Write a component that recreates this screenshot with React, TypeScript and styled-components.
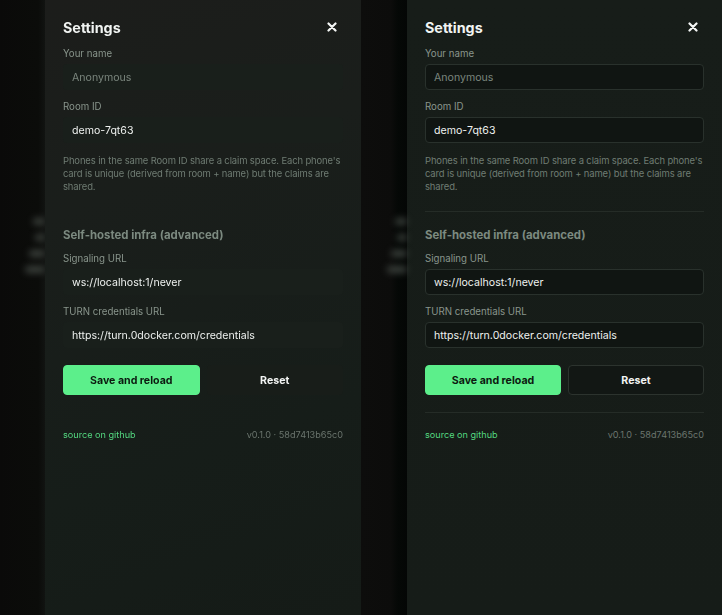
import React, { FC } from "react";
import styled, { createGlobalStyle, css } from "styled-components";

const GlobalStyle = createGlobalStyle`
  html, body {
    margin: 0;
    padding: 0;
    background: #070807;
  }
  body {
    font-family: Inter, "Noto Sans", "Liberation Sans", sans-serif;
    -webkit-font-smoothing: antialiased;
  }
`;

type Faded = { faded?: boolean };

const Stage = styled.div`
  display: grid;
  grid-template-columns: 361px 361px;
  width: 722px;
  height: 615px;
  overflow: hidden;
`;

const Column = styled.div`
  display: flex;
  height: 615px;
`;

const Backdrop = styled.div<Faded>`
  width: ${(p) => (p.faded ? 45 : 46)}px;
  flex: none;
  display: flex;
  flex-direction: column;
  align-items: flex-end;
  gap: 9px;
  padding-top: 218px;
  box-sizing: border-box;
  background: ${(p) =>
    p.faded
      ? "linear-gradient(90deg, #0a0a09 0%, #0b0c0a 85%, #111311 100%)"
      : "linear-gradient(90deg, #0d0d0c 0%, #0c0c0b 65%, #050806 80%, #040605 100%)"};
`;

const Blob = styled.div<{ w: number }>`
  width: ${(p) => p.w}px;
  height: 7px;
  border-radius: 4px;
  background: #454b46;
  filter: blur(3.5px);
  opacity: 0.85;
`;

const Panel = styled.div<Faded>`
  flex: 1;
  display: flex;
  flex-direction: column;
  padding: 16px 18px 0 18px;
  box-sizing: border-box;
  color: #e8ece9;
  background: ${(p) =>
    p.faded
      ? "linear-gradient(160deg, #1c1d1b 0%, #1a1e1b 30%, #161d19 70%, #151b17 100%)"
      : "linear-gradient(180deg, #171d19 0%, #161c18 100%)"};
  ${(p) =>
    p.faded &&
    css`
      filter: blur(0.35px);
    `}
`;

const Header = styled.div`
  display: flex;
  align-items: center;
  justify-content: space-between;
  height: 22px;
`;

const Title = styled.h2`
  margin: 0;
  font-size: 14.3px;
  font-weight: 700;
  color: #f1f4f2;
`;

const Close = styled.button`
  border: 0;
  background: none;
  padding: 0 6px 0 0;
  color: #f4f6f5;
  display: flex;
  cursor: pointer;
`;

const Label = styled.label<{ first?: boolean }>`
  display: block;
  font-size: 9.7px;
  color: #89958c;
  margin: ${(p) => (p.first ? 10 : 11)}px 0 4px;
  line-height: 12px;
`;

const Input = styled.div<Faded & { placeholder?: boolean }>`
  height: 26px;
  box-sizing: border-box;
  border-radius: 4px;
  padding: 0 8px;
  display: flex;
  align-items: center;
  font-size: 10.6px;
  color: ${(p) => (p.placeholder ? "#7a857d" : "#eef1ef")};
  background: ${(p) => (p.faded ? "#191f1b" : "#101512")};
  border: 1px solid ${(p) => (p.faded ? "transparent" : "#29312c")};
`;

const Help = styled.p`
  margin: 11px 0 0;
  font-size: 9.45px;
  letter-spacing: -0.12px;
  line-height: 13px;
  color: #6f7c73;
`;

const Divider = styled.hr<Faded>`
  border: 0;
  height: 1px;
  margin: 0;
  background: ${(p) => (p.faded ? "transparent" : "#252c27")};
`;

const Section = styled.h3`
  margin: 15px 0 0;
  font-size: 11.4px;
  line-height: 16px;
  font-weight: 700;
  color: #7c8a80;
`;

const Buttons = styled.div`
  display: grid;
  grid-template-columns: 1fr 1fr;
  gap: 7px;
  margin-top: 17px;
`;

const Button = styled.button<Faded & { primary?: boolean }>`
  height: 30px;
  border-radius: 4px;
  font-family: inherit;
  font-size: 10.6px;
  font-weight: 700;
  cursor: pointer;
  ${(p) =>
    p.primary
      ? css`
          background: #5cef8b;
          border: 1px solid #5cef8b;
          color: #0c1a10;
        `
      : css`
          background: ${p.faded ? "#181d19" : "#121714"};
          border: 1px solid ${p.faded ? "transparent" : "#2c332e"};
          color: #f2f4f3;
        `}
`;

const Footer = styled.div`
  display: flex;
  justify-content: space-between;
  align-items: center;
  margin-top: 16px;
  font-size: 9.15px;
  line-height: 12px;
`;

const Link = styled.a`
  color: #54d981;
  text-decoration: none;
`;

const Version = styled.span`
  color: #6b756e;
`;

const CloseIcon = () => (
  <svg width="10" height="10" viewBox="0 0 10 10">
    <path
      d="M1.5 1.5 L8.5 8.5 M8.5 1.5 L1.5 8.5"
      stroke="currentColor"
      strokeWidth="2.2"
      strokeLinecap="round"
    />
  </svg>
);

const SettingsPanel: FC<Faded> = ({ faded }) => (
  <Column>
    <Backdrop faded={faded}>
      <Blob w={12} />
      <Blob w={10} />
      <Blob w={16} />
      <Blob w={20} />
    </Backdrop>
    <Panel faded={faded}>
      <Header>
        <Title>Settings</Title>
        <Close aria-label="close">
          <CloseIcon />
        </Close>
      </Header>
      <Label first>Your name</Label>
      <Input faded={faded} placeholder>
        Anonymous
      </Input>
      <Label>Room ID</Label>
      <Input faded={faded}>demo-7qt63</Input>
      <Help>
        Phones in the same Room ID share a claim space. Each phone's card is
        unique (derived from room + name) but the claims are shared.
      </Help>
      <Divider faded={faded} style={{ marginTop: 18 }} />
      <Section>Self-hosted infra (advanced)</Section>
      <Label first>Signaling URL</Label>
      <Input faded={faded}>ws://localhost:1/never</Input>
      <Label>TURN credentials URL</Label>
      <Input faded={faded}>https://turn.0docker.com/credentials</Input>
      <Buttons>
        <Button primary>Save and reload</Button>
        <Button faded={faded}>Reset</Button>
      </Buttons>
      <Divider faded={faded} style={{ marginTop: 17 }} />
      <Footer>
        <Link href="#">source on github</Link>
        <Version>v0.1.0 · 58d7413b65c0</Version>
      </Footer>
    </Panel>
  </Column>
);

const App: FC = () => (
  <>
    <GlobalStyle />
    <Stage>
      <SettingsPanel faded />
      <SettingsPanel />
    </Stage>
  </>
);

export default App;
